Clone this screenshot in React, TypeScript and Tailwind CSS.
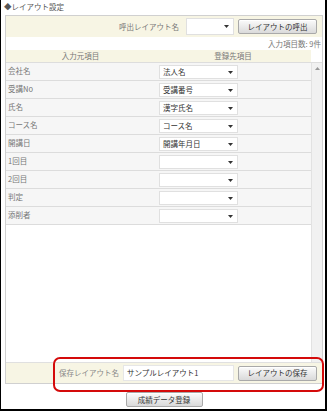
import React from "react";

const font = { fontFamily: '"Noto Sans CJK JP", "Noto Sans", sans-serif' };

function Arrow() {
  return (
    <svg width="5" height="3" viewBox="0 0 5 3" className="shrink-0">
      <path d="M0 0 L5 0 L2.5 3 Z" fill="#333" />
    </svg>
  );
}

function Select({ value, w, h = 14 }: { value: string; w: number; h?: number }) {
  return (
    <div
      className="bg-white border border-[#e0e0e0] flex items-center justify-between pl-[3px] pr-[4px] text-[7.5px] text-[#333] whitespace-nowrap"
      style={{ width: w, height: h }}
    >
      <span className="leading-none">{value}</span>
      <Arrow />
    </div>
  );
}

function Btn({ label, w, h = 15 }: { label: string; w: number; h?: number }) {
  return (
    <div
      className="flex items-center justify-center border border-[#a9a9a9] rounded-[2px] bg-gradient-to-b from-[#fbfbfb] to-[#dadada] text-[7.5px] text-[#333] leading-none whitespace-nowrap shadow-[inset_0_1px_0_#fff]"
      style={{ width: w, height: h }}
    >
      {label}
    </div>
  );
}

const rows: [string, string][] = [
  ["会社名", "法人名"],
  ["受講No", "受講番号"],
  ["氏名", "漢字氏名"],
  ["コース名", "コース名"],
  ["開講日", "開講年月日"],
  ["1回目", ""],
  ["2回目", ""],
  ["判定", ""],
  ["添削者", ""],
];

export default function App() {
  return (
    <div
      className="relative w-[327px] h-[411px] bg-white border-l border-r-2 border-b-2 border-black flex flex-col"
      style={font}
    >
      <div className="h-[15px] pl-[3px] pt-[2px] text-[7.5px] leading-[10px] text-[#555] whitespace-nowrap">◆レイアウト設定</div>
      <div className="ml-[4px] mr-[2px] h-[369px] border border-[#d0d0d0] flex flex-col">
        <div className="h-[21px] bg-[#f7f5e4] flex items-center justify-end pr-[5px]">
          <span className="text-[7.5px] text-[#777] mr-[7px] whitespace-nowrap">呼出レイアウト名</span>
          <Select value="" w={48} h={17} />
          <div className="w-[4px]" />
          <Btn label="レイアウトの呼出" w={79} h={15} />
        </div>
        <div className="h-[13px] flex items-center justify-end pr-[1px] text-[7.5px] text-[#777] leading-none whitespace-nowrap">
          入力項目数: 9件
        </div>
        <div className="flex h-[12px]">
          <div className="w-[305px] bg-[#f7f5e4] flex text-[7.5px] text-[#777] leading-[12px]">
            <div className="w-[149px] text-center">入力元項目</div>
            <div className="flex-1 text-center">登録先項目</div>
          </div>
        </div>
        <div className="flex flex-1 min-h-0 border-t border-[#ddd]">
          <div className="w-[305px] flex flex-col">
            {rows.map(([a, b]) => (
              <div key={a} className="h-[18px] bg-[#f6f6f6] border-b border-[#dcdcdc] flex">
                <div className="w-[153px] pl-[2px] pt-[4px] text-[7.5px] text-[#777] leading-none whitespace-nowrap">{a}</div>
                <div className="pt-[2px]">
                  <Select value={b} w={79} h={14} />
                </div>
              </div>
            ))}
          </div>
          <div className="w-[11px] bg-[#f1f1f1] border-l border-[#e2e2e2] flex justify-center pt-[4px]">
            <svg width="5" height="3" viewBox="0 0 5 3">
              <path d="M0 3 L5 3 L2.5 0 Z" fill="#999" />
            </svg>
          </div>
        </div>
        <div className="h-[21px] bg-[#f7f5e4] border-t border-[#e0e0e0] flex items-center justify-end pr-[5px]">
          <span className="text-[7.5px] text-[#888] mr-[4px] whitespace-nowrap">保存レイアウト名</span>
          <div className="w-[111px] h-[16px] bg-white border border-[#e6e6e6] flex items-center pl-[3px] text-[7.5px] text-[#333] leading-none whitespace-nowrap">
            サンプルレイアウト1
          </div>
          <div className="w-[4px]" />
          <Btn label="レイアウトの保存" w={79} h={15} />
        </div>
      </div>
      <div className="flex justify-center mt-[8px] pl-[2px]">
        <Btn label="成績データ登録" w={77} h={15} />
      </div>
      <div className="absolute left-[52px] top-[357px] w-[271px] h-[35px] border-2 border-[#d40a0a] rounded-[7px] pointer-events-none" />
    </div>
  );
}
